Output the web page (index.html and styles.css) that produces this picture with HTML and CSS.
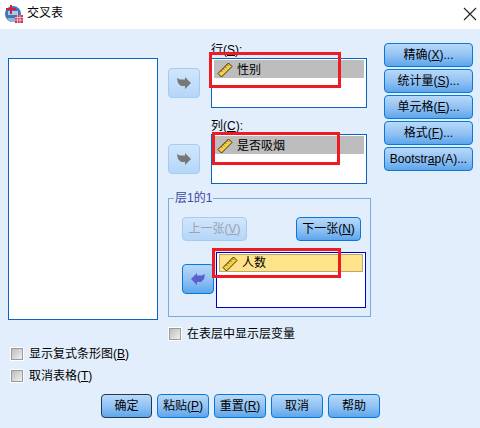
FILE: index.html
```html
<!DOCTYPE html>
<html lang="zh">
<head>
<meta charset="utf-8">
<title>交叉表</title>
<link rel="stylesheet" href="styles.css">
</head>
<body>
<svg class="defs" width="0" height="0">
  <defs>
    <symbol id="ruler" viewBox="0 0 16 16">
      <path d="M1 11.500 11.500 1 15 4.500 4.500 15Z" fill="#f6cf45" stroke="#3a3010" stroke-width="1"/>
      <path d="M4 8.500 5.200 9.700M6 6.500 7.200 7.700M8 4.500 9.200 5.700M10 2.500 11.200 3.700" stroke="#3a3010" stroke-width=".9"/>
    </symbol>
    <symbol id="arrow" viewBox="0 0 14 12">
      <path d="M0 1 3 2.500H8V0L14 6 8 12V9H4L1 6Z"/>
    </symbol>
  </defs>
</svg>
<div class="dialog">
  <header class="titlebar">
    <svg class="app-icon" width="18" height="18" viewBox="0 0 18 18">
      <circle cx="8" cy="9" r="8" fill="#3f78b8"/>
      <path d="M3 6h10v4H3z" fill="#a9cbe8"/>
      <path d="M2 13a8 8 0 0 0 8 4V13z" fill="#8fb4d8"/>
      <path d="M5 0h2v3h4v2H7v4H5V5H1V3h4z" fill="#d21f3c"/>
      <path d="M10 10h8v8h-8z" fill="#c8385a"/>
      <path d="M10 12.500h8M10 15h8M12.500 10v8M15 10v8" stroke="#f6d6de" stroke-width=".8"/>
    </svg>
    <span class="title">交叉表</span>
    <svg class="close" width="14" height="14" viewBox="0 0 14 14"><path d="M1 1 13 13M13 1 1 13" stroke="#222" stroke-width="1.100"/></svg>
  </header>
  <div class="content">
    <div class="main">
      <div class="source-list"></div>
      <div class="middle">
        <section class="target target-row">
          <button class="btn arrow-btn arrow-off" type="button"><svg class="arrow-icon"><use href="#arrow"/></svg></button>
          <div class="target-box">
            <div class="label">行(<u>S</u>):</div>
            <div class="list">
              <div class="item item-selected"><svg class="ruler"><use href="#ruler"/></svg>性别</div>
            </div>
          </div>
        </section>
        <section class="target target-col">
          <button class="btn arrow-btn arrow-off" type="button"><svg class="arrow-icon"><use href="#arrow"/></svg></button>
          <div class="target-box">
            <div class="label">列(<u>C</u>):</div>
            <div class="list">
              <div class="item item-selected"><svg class="ruler"><use href="#ruler"/></svg>是否吸烟</div>
            </div>
          </div>
        </section>
        <section class="layer-group">
          <span class="legend">层1的1</span>
          <div class="layer-nav">
            <button class="btn nav-btn nav-off" type="button">上一张(<u>V</u>)</button>
            <button class="btn nav-btn" type="button">下一张(<u>N</u>)</button>
          </div>
          <div class="layer-row">
            <button class="btn arrow-btn return-btn" type="button"><svg class="arrow-icon return-icon"><use href="#arrow"/></svg></button>
            <div class="layer-list">
              <div class="item item-layer"><svg class="ruler"><use href="#ruler"/></svg>人数</div>
            </div>
          </div>
        </section>
        <label class="check check-layer"><span class="box"></span>在表层中显示层变量</label>
      </div>
      <div class="side-buttons">
        <button class="btn side-btn" type="button">精确(<u>X</u>)...</button>
        <button class="btn side-btn" type="button">统计量(<u>S</u>)...</button>
        <button class="btn side-btn" type="button">单元格(<u>E</u>)...</button>
        <button class="btn side-btn" type="button">格式(<u>F</u>)...</button>
        <button class="btn side-btn" type="button">Bootstr<u>a</u>p(A)...</button>
      </div>
    </div>
    <div class="options">
      <label class="check"><span class="box"></span>显示复式条形图(<u>B</u>)</label>
      <label class="check"><span class="box"></span>取消表格(<u>T</u>)</label>
    </div>
    <footer class="actions">
      <button class="btn act-btn act-default" type="button">确定</button>
      <button class="btn act-btn" type="button">粘贴(<u>P</u>)</button>
      <button class="btn act-btn" type="button">重置(<u>R</u>)</button>
      <button class="btn act-btn" type="button">取消</button>
      <button class="btn act-btn" type="button">帮助</button>
    </footer>
    <div class="mark mark-row"></div>
    <div class="mark mark-col"></div>
    <div class="mark mark-layer"></div>
  </div>
</div>
</body>
</html>
```
FILE: styles.css
```css
* { box-sizing: border-box; }
html, body { margin: 0; padding: 0; }
body {
  width: 480px;
  height: 428px;
  overflow: hidden;
  background: #e2eefb;
  color: #000;
  font: 12px/15px "Liberation Sans", "Noto Sans CJK SC", sans-serif;
}
.defs { position: absolute; }
u { text-underline-offset: 1px; }

.dialog { display: flex; flex-direction: column; height: 428px; }

.titlebar {
  display: flex;
  align-items: center;
  flex: 0 0 29px;
  padding: 0 3px 2px 5px;
  background: #fff;
}
.app-icon { flex: none; }
.title { margin-left: 4px; }
.close { margin-left: auto; }

.content { position: relative; flex: 1; background: #e2eefb; }

.main { display: flex; padding: 14px 0 0 8px; }
.source-list {
  flex: none;
  width: 150px;
  height: 262px;
  margin-top: 15px;
  background: #fff;
  border: 1px solid #0a64c0;
}

.middle { flex: none; width: 203px; margin-left: 10px; }
.target { display: flex; }
.target-col { margin-top: 11px; }
.target-box { margin-left: 11px; width: 156px; }
.list {
  height: 50px;
  padding: 1px 2px;
  background: #fff;
  border: 1px solid #0a64c0;
}
.item { display: flex; align-items: center; height: 18px; padding: 2px 0 0 3px; }
.item-selected { background: #bdbdbd; }
.ruler { flex: none; width: 16px; height: 16px; margin-right: 4px; }

.btn {
  padding: 1px 0 0;
  font: inherit;
  color: #000;
  white-space: nowrap;
  border: 1px solid #0a78d8;
  border-radius: 4px;
  background: linear-gradient(#b7d9f9, #8fc0f3 55%, #5ca6ec);
}
.arrow-btn {
  display: flex;
  flex: none;
  align-items: center;
  justify-content: center;
  width: 32px;
  height: 30px;
  margin-top: 25px;
  padding: 0;
}
.arrow-off {
  border-color: #a0cdf4;
  background: linear-gradient(#d2e6fb, #b4d6f8);
}
.arrow-icon { width: 14px; height: 12px; fill: #777; }
.return-icon { fill: #5e5ecb; transform: scaleX(-1); }

.layer-group {
  position: relative;
  height: 119px;
  margin-top: 14px;
  padding: 18px 9px 0 13px;
  border: 1px solid #74ade2;
}
.legend {
  position: absolute;
  top: -8px;
  left: 5px;
  padding: 0 1px;
  background: #e2eefb;
  color: #3c4aa0;
}
.layer-nav { display: flex; justify-content: space-between; }
.nav-btn { width: 65px; height: 24px; }
.nav-off {
  border-color: #a0cdf4;
  background: linear-gradient(#d2e6fb, #b4d6f8);
  color: #9aa3ad;
}
.layer-row { display: flex; margin: 11px -5px 0 0; }
.return-btn { margin-top: 12px; }
.layer-list {
  flex: none;
  width: 150px;
  height: 56px;
  margin-left: 2px;
  padding: 1px 2px;
  background: #fff;
  border: 1px solid #0000c0;
}
.item-layer {
  padding: 1px 0 0 2px;
  background: #ffe38b;
  border: 1px solid #b9a868;
}

.check { display: flex; align-items: center; height: 14px; }
.box {
  flex: none;
  width: 14px;
  height: 14px;
  margin-right: 5px;
  background: linear-gradient(135deg, #bdbdbd, #f0f0f0);
  border: 2px solid #fff;
  outline: 1px solid #9a9a9a;
  outline-offset: -2px;
}
.check-layer { margin-top: 10px; }

.side-buttons {
  display: flex;
  flex: none;
  flex-direction: column;
  gap: 2px;
  margin-left: 13px;
}
.side-btn { width: 89px; height: 24px; }

.options {
  display: flex;
  flex-direction: column;
  gap: 8px;
  margin: 6px 0 0 10px;
}
.actions {
  display: flex;
  gap: 5px;
  margin: 11px 0 0 101px;
}
.act-btn { width: 52px; height: 24px; }
.act-default { width: 51px; border-color: #24384f; }

.mark { position: absolute; border: 3px solid #ed1c24; }
.mark-row { left: 209px; top: 23px; width: 132px; height: 36px; }
.mark-col { left: 212px; top: 103px; width: 128px; height: 33px; }
.mark-layer { left: 212px; top: 219px; width: 129px; height: 30px; }
```
